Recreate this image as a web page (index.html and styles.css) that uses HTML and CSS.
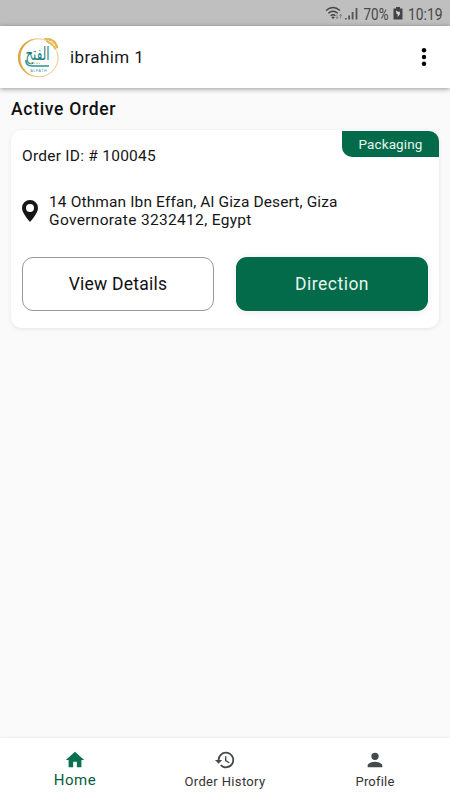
FILE: index.html
```
<!DOCTYPE html>
<html lang="en">
<head>
  <meta charset="UTF-8">
  <meta name="viewport" content="width=device-width, initial-scale=1.0">
  <link rel="stylesheet" href="styles.css">
  <title>Active Order</title>
</head>
<body>
  <div class="status-bar">
    <svg width="125" height="26" viewBox="0 0 125 26">
      <g fill="none" stroke="#454545" stroke-width="1.4">
        <path d="M1 10.500Q8 4.500 15 10.500"/>
        <path d="M3.300 13.300Q8 9.300 12.700 13.300"/>
        <path d="M5.600 15.800Q8 13.700 10.400 15.800"/>
      </g>
      <path d="M6.300 17.200Q8 15.800 9.700 17.200L8 19z" fill="#454545"/>
      <path d="M12 14.500v4M10.800 17.200l1.200 1.500 1.200-1.500M15.700 18.500v-4M14.500 15.800l1.200-1.500 1.200 1.500" fill="none" stroke="#777" stroke-width=".8"/>
      <path d="M20 18h1.600v1.500H20zM23.200 15.500h1.800v4h-1.800zM26.700 12h1.800v7.500h-1.800zM30.600 8h1.800v11.500h-1.800z" fill="#555"/>
      <text class="status-text" x="38.500" y="19.500" textLength="25" lengthAdjust="spacingAndGlyphs">70%</text>
      <path d="M71 7h4v1.500h2.500v11h-9v-11H71z" fill="#444"/>
      <path d="M71 10.500l2.500 1.500 1.500-.5-.2 3-2.300 2.500.3-2.500-1.500-1z" fill="#d4d4d4"/>
      <text class="status-text" x="83" y="19.500" textLength="34.500" lengthAdjust="spacingAndGlyphs">10:19</text>
    </svg>
  </div>

  <header class="header">
    <svg class="logo" width="42" height="42" viewBox="0 0 42 42">
      <circle cx="21" cy="21.800" r="19" fill="none" stroke="#e6bf77" stroke-width=".9"/>
      <path d="M21 2.500A19.300 19.300 0 0 0 17 40.600A18.500 18.500 0 0 1 21 2.500z" fill="#dda63c"/>
      <path d="M26 2Q37 4 40.500 15" fill="none" stroke="#fff" stroke-width="3"/>
      <g fill="#e2b650">
        <ellipse cx="28.500" cy="3.300" rx="2.500" ry="1.300" transform="rotate(5 28.500 3.300)"/>
        <ellipse cx="32.500" cy="3.800" rx="2.700" ry="1.400" transform="rotate(20 32.500 3.800)"/>
        <ellipse cx="30" cy="5.800" rx="2.500" ry="1.200" transform="rotate(35 30 5.800)"/>
        <ellipse cx="36.300" cy="6.300" rx="2.700" ry="1.500" transform="rotate(45 36.300 6.300)"/>
        <ellipse cx="33.500" cy="8" rx="2.500" ry="1.200" transform="rotate(45 33.500 8)"/>
        <ellipse cx="38.600" cy="10" rx="2.600" ry="1.400" transform="rotate(70 38.600 10)"/>
        <ellipse cx="36.600" cy="11.500" rx="2.300" ry="1.100" transform="rotate(55 36.600 11.500)"/>
      </g>
      <path d="M27 3.500Q36 6 39.500 15" fill="none" stroke="#f7e4b4" stroke-width=".5"/>
      <text class="logo-name" x="7.500" y="24" textLength="24" lengthAdjust="spacingAndGlyphs">الفتح</text>
      <path d="M8 24Q7.500 30 14 30H31" fill="none" stroke="#2c9292" stroke-width="1.600"/>
      <path d="M12 27.200h10" stroke="#d5b77c" stroke-width="1" stroke-dasharray="2 1"/>
      <text class="logo-sub" x="12.500" y="35.500" textLength="16">ALFATH</text>
    </svg>
    <span class="user-name">ibrahim 1</span>
    <svg class="more" width="6" height="20" viewBox="0 0 6 20">
      <circle cx="3" cy="3.300" r="2.200"/>
      <circle cx="3" cy="10" r="2.200"/>
      <circle cx="3" cy="16.700" r="2.200"/>
    </svg>
  </header>

  <main class="content">
    <h1 class="title">Active Order</h1>
    <section class="card">
      <div class="badge"><span>Packaging</span></div>
      <div class="order-id">Order ID: # 100045</div>
      <div class="address">
        <svg class="pin" width="16" height="22" viewBox="0 0 16 22">
          <path fill-rule="evenodd" d="M8 0a8 8 0 0 0-8 8c0 5.500 8 14 8 14s8-8.500 8-14a8 8 0 0 0-8-8zm0 3.900a4 4 0 1 1 0 8 4 4 0 0 1 0-8z"/>
        </svg>
        <div class="address-text">
          <div class="line-one">14 Othman Ibn Effan, Al Giza Desert, Giza</div>
          <div class="line-two">Governorate 3232412, Egypt</div>
        </div>
      </div>
      <div class="buttons">
        <button class="btn btn-outline"><span>View Details</span></button>
        <button class="btn btn-primary"><span>Direction</span></button>
      </div>
    </section>
  </main>

  <nav class="nav">
    <div class="nav-item active">
      <svg width="22" height="22" viewBox="0 0 24 24"><path d="M10 20v-6h4v6h5v-8h3L12 3 2 12h3v8z"/></svg>
      <span class="nav-home">Home</span>
    </div>
    <div class="nav-item">
      <svg width="22" height="22" viewBox="0 0 24 24"><path d="M13 3a9 9 0 0 0-9 9H1l3.890 3.890.07.14L9 12H6a7 7 0 1 1 2.060 4.940l-1.420 1.420A9 9 0 1 0 13 3zm-1 5v5l4.280 2.540.72-1.210-3.500-2.080V8z"/></svg>
      <span class="nav-history">Order History</span>
    </div>
    <div class="nav-item">
      <svg width="22" height="22" viewBox="0 0 24 24"><path d="M12 12a4 4 0 1 0 0-8 4 4 0 0 0 0 8zm0 2c-2.670 0-8 1.340-8 4v2h16v-2c0-2.660-5.330-4-8-4z"/></svg>
      <span class="nav-profile">Profile</span>
    </div>
  </nav>
</body>
</html>
```
FILE: styles.css
```
* {
  box-sizing: border-box;
}

body {
  margin: 0;
  height: 800px;
  display: flex;
  flex-direction: column;
  font-family: Roboto, sans-serif;
  background: #fafafa;
  color: #161616;
}

.status-bar {
  height: 26px;
  display: flex;
  justify-content: flex-end;
  background: #bfbfbf;
}

.status-text {
  font-size: 17px;
  fill: #484848;
}

.header {
  height: 62px;
  display: flex;
  align-items: center;
  padding: 0 23px 0 18px;
  background: #fff;
  box-shadow: 0 1px 5px rgba(0, 0, 0, 0.4);
}

.logo {
  overflow: visible;
}

.logo-name {
  font-family: "DejaVu Sans", sans-serif;
  font-size: 18px;
  fill: #17807f;
}

.logo-sub {
  font-family: "Liberation Sans", sans-serif;
  font-size: 3.5px;
  fill: #3b9a9a;
}

.user-name {
  margin-left: 10px;
  font-size: 17px;
  letter-spacing: 0.4px;
}

.more {
  margin-left: auto;
}

.content {
  flex: 1;
  padding: 10px 11px;
}

.title {
  margin: 0;
  height: 22px;
  line-height: 22px;
  font-size: 17.5px;
  font-weight: 500;
  letter-spacing: 0.7px;
  color: #111;
}

.card {
  position: relative;
  height: 198px;
  margin-top: 10px;
  padding: 17px 11px;
  border-radius: 11px;
  background: #fff;
  box-shadow: 0 1px 4px rgba(0, 0, 0, 0.09);
}

.badge {
  position: absolute;
  top: 1px;
  right: 0;
  width: 97px;
  height: 26px;
  line-height: 26px;
  text-align: center;
  border-radius: 0 10px 0 10px;
  background: #036a4a;
  color: #e6f5ee;
  font-size: 13.5px;
  letter-spacing: 0.1px;
}

.order-id {
  height: 18px;
  line-height: 18px;
  font-size: 15.5px;
  letter-spacing: 0.25px;
}

.address {
  display: flex;
  align-items: center;
  margin-top: 28px;
}

.pin {
  fill: #161616;
}

.address-text {
  margin-left: 11px;
  font-size: 15.5px;
  line-height: 18px;
  white-space: nowrap;
}

.line-one {
  letter-spacing: 0.13px;
}

.line-two {
  letter-spacing: 0.32px;
}

.buttons {
  display: grid;
  grid-template-columns: 1fr 1fr;
  gap: 22px;
  margin-top: 28px;
}

.btn {
  height: 54px;
  padding: 0;
  border: 1px solid #999;
  border-radius: 11px;
  background: #fff;
  color: #111;
  font-family: inherit;
  font-size: 17.5px;
  letter-spacing: 0.25px;
}

.btn-primary {
  border: none;
  background: #036a4a;
  color: #e6f5ee;
  letter-spacing: 0.5px;
  box-shadow: 0 1px 8px rgba(0, 0, 0, 0.08);
}

.nav {
  height: 62px;
  display: flex;
  background: #fff;
  box-shadow: 0 -1px 2px rgba(0, 0, 0, 0.06);
}

.nav-item {
  flex: 1;
  display: flex;
  flex-direction: column;
  align-items: center;
  padding-top: 11px;
  color: #333;
  fill: #444a4c;
  font-size: 13px;
  line-height: 21px;
}

.nav-history {
  letter-spacing: 0.35px;
}

.nav-profile {
  letter-spacing: 0.2px;
}

.nav-item.active {
  color: #075b3e;
  fill: #0a7150;
  font-size: 15px;
  line-height: 18px;
  letter-spacing: 0.5px;
}
```
